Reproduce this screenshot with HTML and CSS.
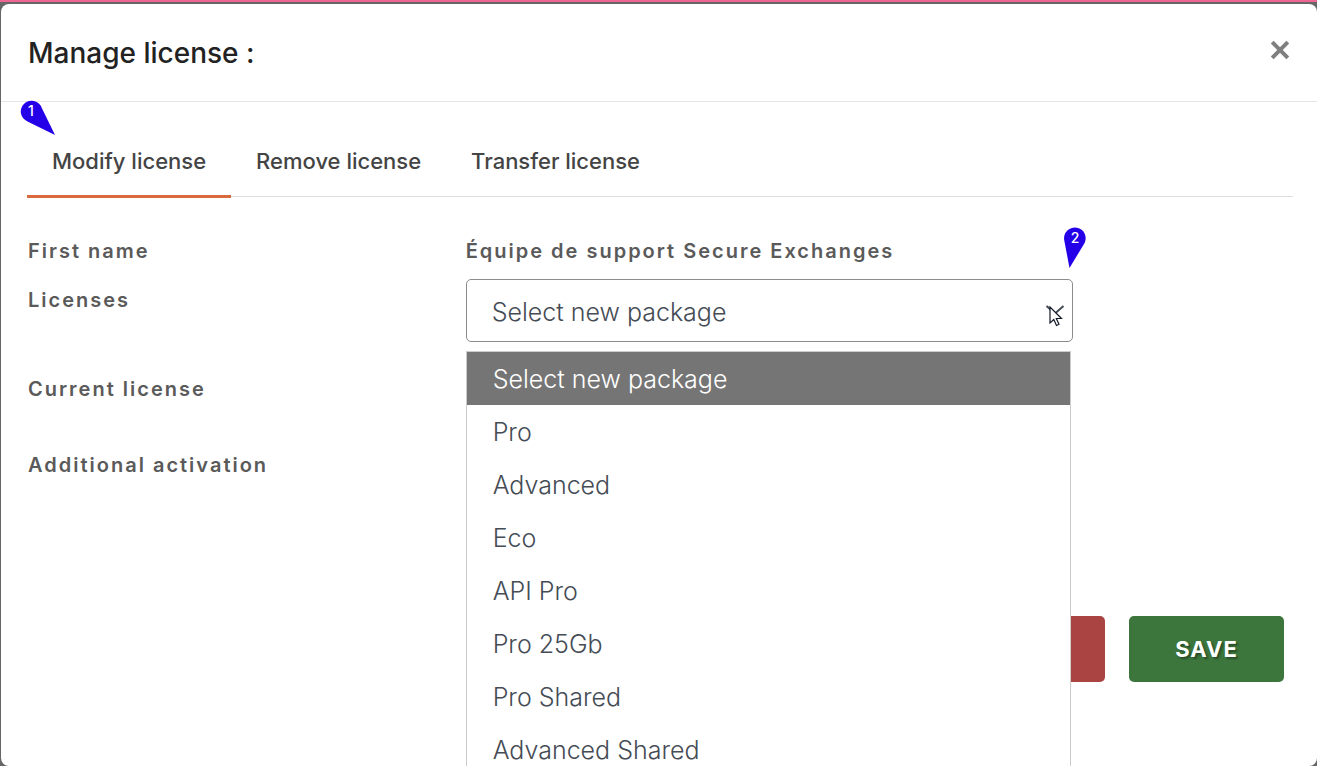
FILE: index.html
```html
<!DOCTYPE html>
<html lang="en">
<head>
    <meta charset="UTF-8">
    <title>Manage license</title>
    <link rel="stylesheet" href="styles.css">
</head>
<body>
<div class="modal" role="dialog" aria-labelledby="modalTitle">
    <div class="modal-header">
        <h1 class="modal-title" id="modalTitle">Manage license :</h1>
        <button class="close" type="button" aria-label="Close dialog">
            <svg width="20" height="20" viewBox="0 0 20 20"><path d="M2.200 2.200L17.800 17.800M17.800 2.200L2.200 17.800" fill="none" stroke="#7f7f7f" stroke-width="4"/></svg>
        </button>
    </div>
    <div class="modal-body">
        <nav class="tabs">
            <a class="tab active" href="#modify">Modify license
                <svg class="pin pin-one" width="36" height="36" viewBox="0 0 36 36"><path d="M35 35L7.500 21.500A10.800 10.800 0 1 1 21.800 8Z" fill="#2400e8"/><text class="pin-text" x="11" y="16" text-anchor="middle">1</text></svg>
            </a>
            <a class="tab" href="#remove">Remove license</a>
            <a class="tab" href="#transfer">Transfer license</a>
        </nav>
        <form class="license-form">
            <div class="row">
                <span class="label">First name</span>
                <span class="label">Équipe de support Secure Exchanges</span>
            </div>
            <div class="row row-select">
                <label class="label" for="package">Licenses</label>
                <div class="select-wrap">
                    <select class="select" id="package">
                        <option>Select new package</option>
                    </select>
                    <svg class="chevron" width="20" height="12" viewBox="0 0 20 12"><path d="M1.500 2L10 9.500L18.500 2" fill="none" stroke="#454c55" stroke-width="2"/></svg>
                    <svg class="cursor" width="14" height="21" viewBox="0 0 14 21"><path d="M1 1V17L4.800 13.500L7.500 19.500L10 18.300L7.300 12.500H12.500Z" fill="#fff" stroke="#111827" stroke-width="1.200"/></svg>
                    <svg class="pin pin-two" width="24" height="42" viewBox="0 0 24 42"><path d="M6.500 41L1.200 13A10.800 10.800 0 1 1 21 17Z" fill="#2400e8"/><text class="pin-text" x="12" y="16" text-anchor="middle">2</text></svg>
                    <ul class="menu" role="listbox" aria-label="Packages">
                        <li class="option selected" role="option" aria-selected="true">Select new package</li>
                        <li class="option" role="option">Pro</li>
                        <li class="option" role="option">Advanced</li>
                        <li class="option" role="option">Eco</li>
                        <li class="option" role="option">API Pro</li>
                        <li class="option" role="option">Pro 25Gb</li>
                        <li class="option" role="option">Pro Shared</li>
                        <li class="option" role="option">Advanced Shared</li>
                    </ul>
                </div>
            </div>
            <div class="row row-tall">
                <span class="label">Current license</span>
            </div>
            <div class="row row-tall">
                <span class="label">Additional activation</span>
            </div>
            <div class="actions">
                <button class="btn btn-close" type="button">Close</button>
                <button class="btn btn-save" type="submit">Save</button>
            </div>
        </form>
    </div>
</div>
</body>
</html>
```
FILE: styles.css
```css
* {
    box-sizing: border-box;
}
body {
    font-family: Inter, "Liberation Sans", sans-serif;
    background-color: #666;
    border-top: 2px solid #ed6495;
    margin: 0;
    padding: 2px 0 0 1px;
    height: 100vh;
    display: flex;
    overflow: hidden;
}
.modal {
    flex: 1;
    background-color: #fff;
    border-radius: 8px;
}
.modal-header {
    display: flex;
    align-items: center;
    justify-content: space-between;
    height: 98px;
    padding: 0 27px;
    border-bottom: 1px solid #e5e5e5;
}
.modal-title {
    margin: 0;
    font-size: 28px;
    font-weight: 500;
    color: #222;
}
.close {
    display: flex;
    padding: 0 0 5px;
    border: none;
    background: none;
    cursor: pointer;
}
.modal-body {
    padding: 25px 24px 0 26px;
}
.tabs {
    display: flex;
    border-bottom: 1px solid #ddd;
}
.tab {
    position: relative;
    height: 71px;
    margin-bottom: -2px;
    padding: 0 25px;
    border-bottom: 3px solid transparent;
    font-size: 22px;
    font-weight: 500;
    line-height: 68px;
    white-space: nowrap;
    color: #444;
    text-decoration: none;
}
.tab.active {
    border-color: #d96a3e;
}
.license-form {
    padding: 42px 0 0 1px;
}
.row {
    display: grid;
    grid-template-columns: 1fr 2fr;
    gap: 24px;
    min-height: 40px;
}
.row-select {
    min-height: 98px;
}
.row-tall {
    min-height: 76px;
}
.label {
    font-size: 20px;
    font-weight: 600;
    line-height: 24px;
    letter-spacing: 2px;
    color: #5a5a5a;
}
.row-select .label {
    padding-top: 9px;
}
.select-wrap {
    position: relative;
    width: 100%;
    max-width: 607px;
    height: 63px;
}
.select {
    appearance: none;
    width: 100%;
    height: 63px;
    padding: 2px 25px 0;
    border: 1px solid #8c8c8c;
    border-radius: 5px;
    background-color: #fff;
    font-family: inherit;
    font-size: 25px;
    font-weight: 300;
    color: #454c55;
}
.chevron {
    position: absolute;
    top: 25px;
    right: 8px;
}
.cursor {
    position: absolute;
    top: 27px;
    right: 10px;
}
.menu {
    position: absolute;
    top: 72px;
    left: 0;
    right: 2px;
    z-index: 1;
    margin: 0;
    padding: 0;
    border: 1px solid #ccc;
    background-color: #fff;
    list-style: none;
}
.option {
    height: 53px;
    padding-left: 26px;
    font-size: 25px;
    font-weight: 300;
    line-height: 55px;
    color: #454c55;
}
.option.selected {
    background-color: #757575;
    color: #fff;
}
.actions {
    display: flex;
    justify-content: flex-end;
    gap: 24px;
    padding: 87px 9px 0 0;
}
.btn {
    width: 155px;
    height: 66px;
    border: none;
    border-radius: 5px;
    color: #fff;
    font-family: inherit;
    font-size: 22px;
    font-weight: 700;
    letter-spacing: 1px;
    text-transform: uppercase;
    text-shadow: 2px 2px 2px rgba(0, 0, 0, 0.35);
    cursor: pointer;
}
.btn-close {
    background-color: #a94442;
}
.btn-save {
    background-color: #3c763d;
}
.pin {
    position: absolute;
}
.pin-one {
    top: -27px;
    left: -7px;
}
.pin-two {
    top: -52px;
    right: -14px;
}
.pin-text {
    font-size: 14px;
    font-weight: 500;
    fill: #fff;
}
```
